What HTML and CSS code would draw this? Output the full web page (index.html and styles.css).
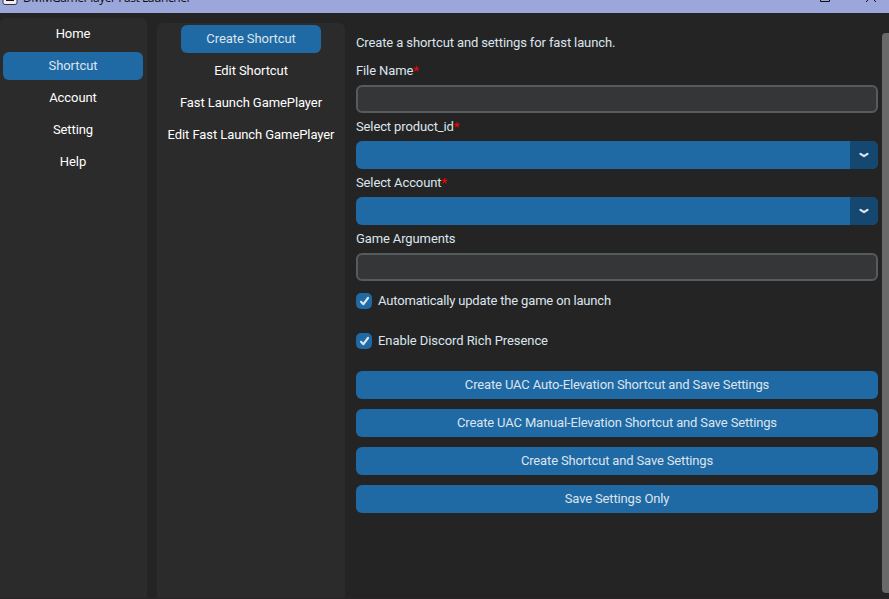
FILE: index.html
```html
<!DOCTYPE html>
<html lang="en">
<head>
<meta charset="utf-8">
<title>DMMGamePlayer Fast Launcher</title>
<link rel="stylesheet" href="styles.css">
</head>
<body>
<div class="window">
  <header class="titlebar">
    <svg class="app-icon" width="16" height="8" viewBox="0 0 16 8"><rect x="1" y="-6.5" width="14" height="14" rx="2" fill="#f4eef2" stroke="#333"/><path d="M4 3h8" stroke="#111" stroke-width="2"/></svg>
    <span class="title">DMMGamePlayer Fast Launcher</span>
    <svg class="controls" width="60" height="4" viewBox="0 0 60 4"><path d="M.5-2V1.5H9.5V-2" fill="none" stroke="#111"/><path d="M46 2l5-5 5 5" fill="none" stroke="#111"/></svg>
  </header>
  <div class="body">
    <nav class="panel main-nav">
      <a class="nav-item">Home</a>
      <a class="nav-item active">Shortcut</a>
      <a class="nav-item">Account</a>
      <a class="nav-item">Setting</a>
      <a class="nav-item">Help</a>
    </nav>
    <nav class="panel sub-nav">
      <a class="nav-item active">Create Shortcut</a>
      <a class="nav-item">Edit Shortcut</a>
      <a class="nav-item">Fast Launch GamePlayer</a>
      <a class="nav-item">Edit Fast Launch GamePlayer</a>
    </nav>
    <main class="content">
      <p class="label">Create a shortcut and settings for fast launch.</p>
      <p class="label">File Name<span class="required">*</span></p>
      <div class="entry"></div>
      <p class="label">Select product_id<span class="required">*</span></p>
      <div class="select"><span class="arrow"><svg width="10" height="6" viewBox="0 0 10 6"><path d="M1.5 1.8L5 4.2L8.5 1.8" /></svg></span></div>
      <p class="label">Select Account<span class="required">*</span></p>
      <div class="select"><span class="arrow"><svg width="10" height="6" viewBox="0 0 10 6"><path d="M1.5 1.8L5 4.2L8.5 1.8" /></svg></span></div>
      <p class="label">Game Arguments</p>
      <div class="entry"></div>
      <div class="checks">
        <div class="check update"><span class="box"><svg width="16" height="16" viewBox="0 0 16 16"><path d="M5 8.8l2.4 2.4 4.6-6.2"/></svg></span>Automatically update the game on launch</div>
        <div class="check"><span class="box"><svg width="16" height="16" viewBox="0 0 16 16"><path d="M5 8.8l2.4 2.4 4.6-6.2"/></svg></span>Enable Discord Rich Presence</div>
      </div>
      <div class="actions">
        <div class="button">Create UAC Auto-Elevation Shortcut and Save Settings</div>
        <div class="button">Create UAC Manual-Elevation Shortcut and Save Settings</div>
        <div class="button">Create Shortcut and Save Settings</div>
        <div class="button">Save Settings Only</div>
      </div>
    </main>
    <div class="scrollbar"></div>
  </div>
</div>
</body>
</html>
```
FILE: styles.css
```css
* { box-sizing: border-box; }
body { margin: 0; background: #242424; font: 13px/28px Roboto, sans-serif; letter-spacing: -.12px; color: #dce4ee; }
.window { height: 599px; display: flex; flex-direction: column; overflow: hidden; border-bottom: 1px solid #2b2427; }
.titlebar { height: 13px; flex: none; display: flex; align-items: flex-start; background: #9ba6da; color: #111; overflow: hidden; }
.app-icon { margin-left: 2px; flex: none; margin-top: -3px; }
.title { margin: -10px 0 0 5px; font: 12px/16px "Open Sans", sans-serif; letter-spacing: -.43px; white-space: nowrap; }
.controls { margin: 0 9px 0 auto; flex: none; }
.body { flex: 1; min-height: 0; display: flex; }
.panel { flex: none; display: flex; flex-direction: column; align-items: center; background: #2b2b2b; }
.main-nav { width: 147px; margin-top: 5px; padding: 2px 4px 0 3px; gap: 4px; border-radius: 6px 6px 0 0; }
.sub-nav { width: 188px; margin: 10px 0 0 10px; padding-top: 2px; gap: 4px; border-radius: 6px 6px 0 0; }
.nav-item { flex: none; min-width: 140px; height: 28px; text-align: center; color: #fff; letter-spacing: -.08px; border-radius: 6px; white-space: nowrap; }
.active { background: #1f6aa5; color: #dce4ee; }
.content { width: 522px; flex: none; margin: 16px 0 0 11px; }
.label { margin: 0; height: 28px; }
.required { color: #f00; }
.entry { height: 28px; border: 2px solid #565b5e; border-radius: 6px; background: #343638; }
.select { height: 28px; display: flex; justify-content: flex-end; background: #1f6aa5; border-radius: 6px; overflow: hidden; }
.arrow { width: 28px; display: flex; align-items: center; justify-content: center; background: #144870; }
.arrow svg, .box svg { display: block; fill: none; stroke: #dce4ee; stroke-width: 2.2; stroke-linecap: round; stroke-linejoin: round; }
.checks { margin-top: 8px; display: flex; flex-direction: column; gap: 16px; }
.check { height: 24px; display: flex; align-items: center; gap: 6px; line-height: 24px; letter-spacing: -.07px; }
.update { letter-spacing: -.17px; }
.box { width: 16px; height: 16px; border-radius: 5px; background: #1f6aa5; }
.actions { margin-top: 18px; display: flex; flex-direction: column; gap: 10px; }
.button { height: 28px; border-radius: 6px; background: #1f6aa5; text-align: center; letter-spacing: -.15px; }
.scrollbar { width: 10px; height: 560px; flex: none; margin: 20px 0 0 4px; border-radius: 4px; background: #696969; }
```
